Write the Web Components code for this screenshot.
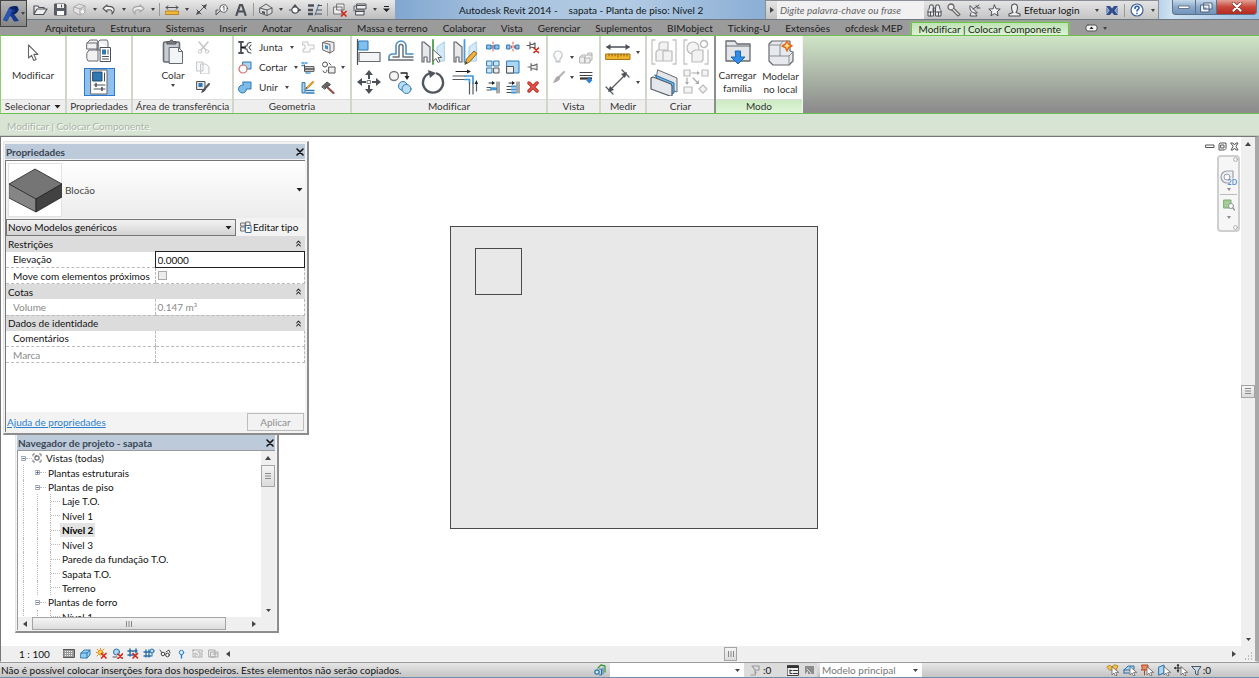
<!DOCTYPE html>
<html lang="pt"><head><meta charset="utf-8"><title>Revit</title>
<style>
html,body{margin:0;height:100%}
body{font:10px/14px Lato,"Open Sans",sans-serif;font-variant-ligatures:none;color:#111;overflow:hidden}
</style></head>
<body>
<rv-app></rv-app>
<script>
const S = (w, h, body) => `<svg width="${w}" height="${h}" viewBox="0 0 ${w} ${h}" fill="none" stroke-linecap="round" stroke-linejoin="round">${body}</svg>`;
const K = '#4c5057', B = '#2f78b4', L = '#a6d4f2', G = '#c3c6c9';
const CUR = (x, y) => `<path transform="translate(${x} ${y})" d="M0 0v8l2-2 1.500 3 1.500-.7-1.400-2.900h2.700z" fill="#fff" stroke="#666" stroke-width=".8"/>`;
const RX = (x, y) => `<path transform="translate(${x} ${y})" d="M0 0l4.500 4.500M4.500 0L0 4.500" stroke="#d42a1e" stroke-width="1.700"/>`;
const ICONS = {
  drop: S(5, 3, `<path d="M0 0h5L2.500 3z" fill="#444"/>`),
  dropsm: S(4, 3, `<path d="M0 0h4L2 3z" fill="#444"/>`),
  dropbig: S(7, 4, `<path d="M.5 0h6L3.500 3.500z" fill="#222"/>`),
  custom: S(7, 7, `<path d="M1 0h5v1H1zM0 2.500h7L3.500 6z" fill="#222"/>`),
  up: S(6, 4, `<path d="M0 4h6L3 0z" fill="#444"/>`),
  left: S(4, 6, `<path d="M4 0v6L0 3z" fill="#444"/>`),
  right: S(4, 6, `<path d="M0 0v6l4-3z" fill="#444"/>`),
  close: S(8, 8, `<path d="M1 1l6 6M7 1L1 7" stroke="#111" stroke-width="1.600"/>`),
  chev: S(5, 7, `<path d="M.7 3l1.800-2 1.800 2M.7 6l1.800-2 1.800 2" stroke="#222" stroke-width="1.100"/>`),
  revit: S(19, 20, `<path d="M1 16L7 4l8-2 2 4-5 4 5 7-5 .5-3-5-2 0-2 5z" fill="#173a8c"/><path d="M7 4l4-.5-5 13L1 16z" fill="#2a55b0"/><path d="M7 4c2-2 8-3 9 0 1 4-2 6-6 7l1-2.500c3-1 3-3.500-1-3z" fill="#0a2264"/>`),
  open: S(15, 12, `<path d="M1 10V2h4l1 1.500h5V5M1 10l3-5h10l-3.500 5.500H1z" fill="#eee" stroke="${K}" stroke-width="1.200"/>`),
  save: S(13, 13, `<path d="M1 1h10l1 1v10H1z" fill="#5a5f67" stroke="${K}"/><path d="M3 1h7v4H3z" fill="#eee"/><path d="M3 8h7v4H3z" fill="#fff"/><path d="M7.500 2v2" stroke="${K}"/>`),
  sync: S(14, 13, `<path d="M1 4l5-3 6 2v6l-5 3-6-3zM1 4l6 2 5-3M7 6v6" fill="#e4e4e4" stroke="#aaa"/><circle cx="9.500" cy="8.500" r="2.500" fill="#f2f2f2" stroke="#b4b4b4"/>`),
  undo: S(14, 11, `<path d="M5 1L1 4.500 5 8V6c4-1 6 .5 5 4 4-4 2-8.500-5-7.500z" fill="#f4f4f4" stroke="#555" stroke-width="1.100"/>`),
  redo: S(14, 11, `<path d="M9 1l4 3.500L9 8V6c-4-1-6 .5-5 4-4-4-2-8.500 5-7.500z" fill="#eee" stroke="#a2a2a2" stroke-width="1.100"/>`),
  ruler: S(14, 10, `<path d="M1 2.500h12M3 .8L1 2.500l2 1.700M11 .8l2 1.700-2 1.700" stroke="${K}"/><path d="M.5 6h13v3.500H.5z" fill="#f2b83c" stroke="#a87514" stroke-width=".8"/>`),
  dim: S(13, 13, `<path d="M3 10l7-7M2 7l4 4M7 2l4 4" stroke="${K}"/><path d="M1 12l1.500-4 2.500 2.500zM12 1L8 2.500 10.500 5z" fill="${K}"/>`),
  tag: S(13, 12, `<circle cx="8.500" cy="4.500" r="3.800" fill="#fff" stroke="${K}" stroke-width=".9"/><path d="M8 3l1-.7v4M5 7l-4 4V6h2" stroke="${K}" stroke-width=".9"/>`),
  letter: S(12, 12, `<path d="M1.500 11L5 1h2l3.500 10M3 7.500h6" stroke="${K}" stroke-width="2.200"/>`),
  cube3: S(14, 13, `<path d="M1 5l6-4 6 4v5l-5 2.500L1 10z" fill="#ddd" stroke="${K}" stroke-width=".9"/><path d="M1 5l7 2 5-2M8 7v5.500" stroke="${K}" stroke-width=".9"/><path d="M3 8l3 .8v2.400L3 10z" fill="${K}"/>`),
  section: S(12, 12, `<path d="M0 6h3M9 6h3" stroke="${K}"/><circle cx="6" cy="6" r="3.200" fill="#fff" stroke="${K}" stroke-width="1.200"/><path d="M6 0l2.500 3h-5zM9 4l3 2-3 2z" fill="${K}"/>`),
  thin: S(14, 12, `<path d="M0 1.500h6M0 6h5M0 10h5" stroke="${K}" stroke-width="2.400" stroke-linecap="butt"/><path d="M7 11l4-11" stroke="${B}"/><path d="M10 1.500h4M9 6h5M8 10h6" stroke="${K}" stroke-width="1"/>`),
  closehid: S(14, 14, `<path d="M4 1h7v6H4zM1 4h8v7H1z" fill="#eee" stroke="#666" stroke-width=".9"/>${RX(8.500, 8.500)}`),
  switchw: S(14, 13, `<path d="M4 1h9v5H4zM3 7h8v5H3z" fill="#eee" stroke="${K}"/><path d="M4 2.500h8M3 8.500h8" stroke="${K}"/><path d="M1 8V3h1.500" stroke="${K}" stroke-width=".9"/>`),
  binoc: S(15, 13, `<path d="M2 5l1-4h3l.5 4v7H1V7zM13 5l-1-4H9l-.5 4v7H14V7z" fill="#eee" stroke="${K}"/><path d="M6.500 4h2v3h-2zM1 8h5.500M8.500 8H14M3.500 8v4M11.500 8v4" stroke="${K}"/>`),
  key: S(14, 14, `<circle cx="4" cy="4" r="3" fill="#eee" stroke="#666" stroke-width="1.300"/><path d="M5 7l6 6 2-1.500L7 5.500" fill="#eee" stroke="#666" stroke-width="1.100"/>`),
  sat: S(13, 13, `<path d="M2 2c-1 4 2 8 7 7zM3 9l-1 3h7l-2-3" fill="#eee" stroke="${K}"/><path d="M5 5l6-4M9 4h3M8 1.500l2 2" stroke="${K}"/>`),
  star: S(13, 13, `<path d="M6.500 1l1.600 3.800 4.100.3-3.100 2.700 1 4-3.600-2.200L2.900 11.800l1-4L.800 5.100l4.100-.3z" fill="#f4f4f4" stroke="${K}"/>`),
  person: S(13, 14, `<path d="M3.500 4.500a3 3.500 0 0 1 6 0c0 3-1 4-1.500 5l4 1.500V13H1v-2l4-1.500c-.5-1-1.500-2-1.500-5z" fill="#eee" stroke="${K}" stroke-width="1.100"/>`),
  xchg: S(12, 11, `<path d="M0 1h4l2 2.500L8 1h4L8.500 5.500 12 10H8L6 7.500 4 10H0l3.500-4.500z" fill="#2f4f8e"/><path d="M0 2v7l3-3.500zM12 2v7L9 5.500z" fill="#7b93c4"/>`),
  help: S(14, 14, `<circle cx="7" cy="7" r="6" fill="#fff" stroke="#3f5f95" stroke-width="1.200"/><path d="M5 5.500c0-3 4-2.800 4-.5 0 1.500-2 1.500-2 3M7 10.400v.2" stroke="#2d5fb2" stroke-width="1.600"/>`),
  wmin: S(12, 6, `<path d="M1 2h10v2.500H1z" fill="#fff" stroke="#50627a" stroke-width=".8"/>`),
  wmax: S(13, 11, `<path d="M4 1h8v6H4zM1 3h8v7H1z" fill="#eef4fa" stroke="#50627a"/><path d="M3.500 5.500h3v2h-3z" fill="#6a86a8"/>`),
  wclose: S(12, 10, `<path d="M2.500 1.500l7 7M9.500 1.500l-7 7" stroke="#73302a" stroke-width="3.400"/><path d="M2.500 1.500l7 7M9.500 1.500l-7 7" stroke="#fff" stroke-width="2.200"/>`),
  arrow: S(12, 18, `<path d="M1.500 1v13l3-2.700 2.300 5.200 2.400-1-2.300-5.100h4z" fill="#fff" stroke="#666" stroke-width="1.100"/>`),
  types: S(26, 26, `<path d="M1 5l3-3h7l1 2V11H1zM12 4l2-2h7l1 2v5M1 15l2-3h9v11H2l-1-2zM12 4v8h6" fill="#f1f1f2" stroke="#666b72"/><path d="M1 5h10v7" stroke="#666b72"/><rect x="14.500" y="9.500" width="10" height="14" fill="#fff" stroke="${K}"/><path d="M16 11.500h4v5h-4z" fill="${B}"/><path d="M22 12v4M16.500 18.500h6M16.500 21h6" stroke="${K}"/>`),
  props: S(18, 26, `<rect x="1" y="1" width="16" height="24" fill="#fff" stroke="#666"/><path d="M3 3h9v9H3z" fill="#2f78b4" stroke="#27496c"/><path d="M14.500 4v8M4 16h11M4 20h11" stroke="${K}"/><path d="M6 14.500v3M12 18.500v3" stroke="${K}" stroke-width="1.600"/>`),
  paste: S(22, 26, `<rect x="1.500" y="3" width="16" height="20" rx="1.500" fill="#c9ccd1" stroke="#666b72" stroke-width="1.600"/><path d="M5 4V2.500h3C8 .5 11 .5 11 2.500h3V5H5z" fill="#777c84" stroke="#555"/><path d="M7.500 8.500h9l4 4v12h-13z" fill="#f2f4f7" stroke="#666b72"/><path d="M16.500 8.500v4h4" stroke="#666b72"/>`),
  cut: S(13, 13, `<path d="M2 1l7 8M11 1L4 9" stroke="${G}" stroke-width="1.500"/><circle cx="3" cy="10.500" r="1.700" stroke="${G}"/><circle cx="10" cy="10.500" r="1.700" stroke="${G}"/>`),
  copy2: S(14, 13, `<path d="M1 1h6v9H1zM5 3h5l3 3v7H5z" fill="#fafafa" stroke="${G}"/>`),
  match: S(14, 14, `<path d="M1 1.500h8v8H1z" fill="#e8e8e8" stroke="${K}"/><path d="M2.500 3h4v4h-4z" fill="${B}"/><path d="M13 4L9 8.500" stroke="#555" stroke-width="2"/><path d="M9 8c2 1 0 4-4 5 1-2 1-4 4-5z" fill="${K}"/>`),
  cope: S(14, 13, `<path d="M1 1h4M1 12h4M3 1v11" stroke="${K}" stroke-width="1.800"/><path d="M4 6.500h3" stroke="#111" stroke-width="2"/><path d="M13 1.500c-3 0-4 2-4 3.500H7v3h2c0 2 1 4 4 4M13 4l-2 2.500L13 9" stroke="${K}" stroke-width="1.100"/>`),
  cutg: S(14, 13, `<path d="M5 1h8v7H5z" fill="${L}" stroke="${B}"/><circle cx="5" cy="8" r="4" fill="#fff" stroke="#d86a6a" stroke-width="1.200"/>`),
  join: S(14, 13, `<path d="M5 1h8v7H8.500A4 4 0 1 1 5 4z" fill="#7bbce8" stroke="${B}"/>`),
  jt: S(13, 12, `<path d="M1 1h5v3h6v4H8v3H1V8h2V4H1z" fill="#fafafa" stroke="${G}"/>`),
  face: S(13, 14, `<path d="M1 2.500l7 2V13l-7-3zM1 2.500L5 1l7 1.500v8L8 13" fill="#eee" stroke="#666"/><path d="M3 5l3 1v3.500L3 8.500z" fill="#3b8fd0"/>`),
  beam: S(14, 13, `<path d="M1 2h5M1 4.500h2M5 12h4" stroke="#3f97d8" stroke-width="1.600" stroke-dasharray="2 1.500"/><path d="M4 5.500h9v5H4z" fill="#ccc" stroke="#666"/><path d="M4 8h9" stroke="#555" stroke-width="1.400"/><path d="M3.500 4v6" stroke="${K}"/>`),
  split: S(15, 13, `<circle cx="4" cy="3.500" r="2.500" stroke="#555"/><path d="M8 6h6v6H8z" fill="#eee" stroke="#555"/><path d="M2 10a2 2 0 1 0 4-1M8 2l2 2" stroke="#555"/>`),
  demol: S(14, 13, `<path d="M1 2v10h3V2z" fill="${L}" stroke="${B}"/><path d="M5 9.500h8M5 12h8" stroke="${B}" stroke-width="1.500"/><path d="M6 7l6-6" stroke="#e09a2d" stroke-width="2.300"/><path d="M5 8l.5-1.500" stroke="${K}"/>`),
  hammer: S(14, 13, `<path d="M6 6l6.500 6" stroke="#8d4f49" stroke-width="2.200"/><path d="M1 5.500L6 1l3.500 2.500-1.500 1.500-1.500 0L4 8z" fill="#666" stroke="${K}"/>`),
  align: S(26, 26, `<path d="M1.500 0v26" stroke="${K}" stroke-width="1.200"/><rect x="3" y="2" width="9" height="9" fill="#7fc0ee" stroke="${B}"/><rect x="3" y="13.500" width="21" height="9" fill="#f3f4f6" stroke="#666b72" stroke-width="1.200"/>`),
  offset: S(26, 24, `<path d="M1 20v-3c0-2 2-3 4-3h3V6a4.500 4.500 0 0 1 10 0v8h7" stroke="#4a90c8" stroke-width="1.600"/><path d="M1 20h24M5 17h6V6.500a2 2 0 0 1 4 0V17h10" stroke="#6b7078" stroke-width="1.500"/>`),
  mirpick: S(26, 26, `<path d="M2 3h2l6 5v15H7v-5H4v5H2z" fill="#e7e8ea" stroke="#666b72" stroke-width="1.200"/><path d="M13 1v24" stroke="#4aa04a" stroke-width="1.800"/><path d="M24 3l-7 5v14h7z" fill="#d5eaf8" stroke="#a5cbe6"/><path d="M13 11v11l3-2.500 2 4 2-1-2-4h3.500z" fill="#fff" stroke="#666"/>`),
  mirdraw: S(26, 26, `<path d="M2 3h2l6 5v15H7v-5H4v5H2z" fill="#e7e8ea" stroke="#666b72" stroke-width="1.200"/><path d="M12.500 1v22" stroke="#4a9bd8" stroke-width="1.800"/><path d="M24 3l-7 5v14h7z" fill="#d5eaf8" stroke="#a5cbe6"/><path d="M13 25l1.500-5L22 12l3 2.500-7 8z" fill="#f0b23c" stroke="#8c621b"/><path d="M13 25l1-2.500 1.500 1.500z" fill="#333"/>`),
  move: S(26, 26, `<path d="M13 1l4 5h-3v4h-2V6H9zM13 25l4-5h-3v-4h-2v4H9zM1 13l5-4v3h4v2H6v3zM25 13l-5-4v3h-4v2h4v3z" fill="${K}"/><path d="M11.500 11.500h3v3h-3z" fill="#fff" stroke="#777"/>`),
  copy: S(26, 26, `<circle cx="6" cy="7" r="4.500" fill="#f5f5f5" stroke="#777" stroke-width="1.300"/><path d="M13 4h6v4" stroke="#222" stroke-width="1.300"/><path d="M16.500 7h5L19 11z" fill="#222"/><circle cx="15" cy="17" r="4.500" fill="#b8ddf5" stroke="${B}"/><circle cx="18.500" cy="20" r="4.500" fill="#b8ddf5" stroke="${B}"/>`),
  rotate: S(26, 26, `<path d="M9 4.500a10 10 0 1 0 8 0" stroke="#51565e" stroke-width="2.400"/><path d="M8 1l8 3-6 5z" fill="#51565e"/>`),
  trim: S(26, 26, `<path d="M4 2.500h13" stroke="#222"/><path d="M15 .5l4 2-4 2z" fill="#222"/><path d="M1 7h12M1 10.500h12" stroke="#555a61" stroke-width="1.200"/><path d="M13 7h8v7M13 10.500h4.500V14" stroke="#3f97d8" stroke-width="1.700"/><path d="M17.500 14v11M21 14v11M24.500 22v-8" stroke="#555a61" stroke-width="1.200"/><path d="M22.500 15l2-4 1.500 4z" fill="#222"/>`),
  spl1: S(14, 12, `<path d="M1 4h4v4H1zM9 4h4v4H9zM5 5h4M5 7h4" fill="#8cc5ee" stroke="${B}"/><path d="M7 1v10" stroke="#d85a4a" stroke-dasharray="2 1.500"/>`),
  spl2: S(14, 12, `<path d="M1 4h3v4H1zM10 4h3v4h-3z" fill="#8cc5ee" stroke="${B}"/><path d="M7 1v10M5.500 5v2M8.500 5v2" stroke="#d85a4a" stroke-dasharray="2 1.500"/>`),
  unpin: S(14, 14, `<path d="M1 5.500h3M4 2v7M4 4c2 1 3 1 5-1v5c-2-1-3-1-5-.5" stroke="#555" stroke-width="1.100"/>${RX(8, 8)}`),
  array: S(14, 14, `<path d="M1 1h5v5H1zM8 1h5v5H8zM1 8h5v5H1z" fill="#cfe6f7" stroke="${B}"/><path d="M8 8h5v5H8z" fill="#eee" stroke="#555"/>`),
  scale: S(14, 14, `<path d="M1 1h12v12H1z" fill="#a8d6f5" stroke="${B}"/><path d="M1 6.500h6.500V13H1z" fill="#f3f3f3" stroke="#555"/>`),
  pin: S(12, 10, `<path d="M1 5h3M4 1.500v7M4 3c2 1 3 1 6-1v6c-3-2-4-1.500-6-1" fill="#eee" stroke="#666" stroke-width="1.100"/>`),
  tr1: S(14, 13, `<path d="M3 2h4" stroke="#222"/><path d="M6 0l3 2-3 2z" fill="#222"/><path d="M1 6.500h4M1 9h4" stroke="#555"/><path d="M5.500 7.800h4" stroke="#3f97d8" stroke-width="3"/><path d="M11 1v11M13 1v11" stroke="#555"/>`),
  tr2: S(14, 13, `<path d="M3 2h4" stroke="#222"/><path d="M1 5.500h4M1 8.500h4M1 11.500h4" stroke="#444"/><path d="M6 0l3 2-3 2z" fill="#222"/><path d="M5.500 5.500h4M5.500 8.500h4M5.500 11.500h4" stroke="#3f97d8" stroke-width="1.800"/><path d="M11 1v11M13 1v11" stroke="#555"/>`),
  del: S(12, 12, `<path d="M2 2l8 8M10 2l-8 8" stroke="#b62b22" stroke-width="3.400"/><path d="M2 2l8 8M10 2l-8 8" stroke="#e85a4c" stroke-width="1.600"/>`),
  bulb: S(12, 14, `<path d="M4 9C0 6 2 1 6 1s6 5 2 8v3H4zM4 11h4" fill="#fafafa" stroke="${G}" stroke-width="1.100"/>`),
  boxes: S(14, 13, `<path d="M1 6h5v6H1zM6 7h5v5H6zM1 6l2-2h4l-1 2M8 4h5v5l-2 1M8 4l1-2h4v2" fill="#eee" stroke="#b5b5b5"/>`),
  brush: S(13, 13, `<path d="M12 1L7 6" stroke="#b5b5b5" stroke-width="2.200"/><path d="M7 5c3 2 0 6-6 7 2-3 2-7 6-7z" fill="#ababab"/>`),
  linew: S(14, 13, `<path d="M1 1.500h12M1 4.500h12" stroke="#444" stroke-width="1"/><path d="M1 7.500h12" stroke="#333" stroke-width="2.200" stroke-linecap="butt"/><path d="M9 6h2.500v3h2l-3.200 3.500L7 9h2z" fill="#2a80d8"/>`),
  meas: S(26, 18, `<path d="M2 4h22" stroke="${K}" stroke-width="1.300"/><path d="M1 4l4.500-3v6zM25 4l-4.500-3v6z" fill="${K}"/><path d="M1 11h24v5.500H1z" fill="#efb32e" stroke="#a4751b"/><path d="M4 11v2M7 11v2M10 11v2M13 11v3M16 11v2M19 11v2M22 11v2" stroke="#7a5410" stroke-width=".8"/>`),
  dimbig: S(26, 26, `<path d="M5 21L20 6M1 18l7 7M17 1l7 7" stroke="#555a61" stroke-width="1.300"/><path d="M3 23l2-6 4 4zM22 3l-6 2 4 4z" fill="${K}"/>`),
  grp: S(26, 26, `<path d="M4 1H1v24h3M22 1h3v24h-3" stroke="#c4c4c4" stroke-width="1.300"/><path d="M5 13l2-2h5v11H5zM12 12h9v10h-9zM8 5l2-2h7v8H8z" fill="#f2f2f2" stroke="#bbb" stroke-width="1.200"/>`),
  sim: S(26, 26, `<path d="M4 1H1v24h3M22 25h3V11" stroke="#c4c4c4" stroke-width="1.300"/><circle cx="10" cy="9" r="6" fill="#f4f4f4" stroke="#bbb" stroke-width="1.200"/><path d="M9 13l3-2h8v10l-2 2H9z" fill="#f2f2f2" stroke="#bbb" stroke-width="1.200"/><circle cx="21" cy="5" r="3.500" stroke="#bbb" stroke-width="1.600" stroke-dasharray="2 1"/>`),
  sheets: S(28, 27, `<path d="M8 1l19 8v14l-3-1L6 12z" fill="#e3e5e8" stroke="#666b72"/><path d="M5 6l19 8v10l-4 2z" fill="#6fb8ee" stroke="#286ba5"/><path d="M1 9l2-1 18 7 1 2v10l-2 0L1 20z" fill="#e4e7eb" stroke="#555a61" stroke-width="1.200"/>`),
  asm: S(26, 26, `<path d="M1 1h6v6H1zM19 1h6v6h-6zM1 18h8v6H1zM20 16l4 4-4 4-4-4z" fill="#f4f4f4" stroke="#bbb" stroke-width="1.200"/><path d="M9 4h6M4 9v4M10 9l4 4" stroke="#aaa" stroke-width="1.200"/><path d="M14 2l3 2-3 2zM16 15l0-4-4 4zM2 13h4l-2 3z" fill="#aaa"/>`),
  loadfam: S(26, 26, `<path d="M1 22V2h9l2 3h13v17z" fill="#e3e5e9" stroke="#666b72" stroke-width="1.300"/><path d="M1 7h24" stroke="#666b72"/><path d="M10.500 12h5v6H20l-7 7-7-7h4.500z" fill="#2f8fe8" stroke="#1a66b4"/>`),
  inplace: S(26, 27, `<path d="M1 5l3-3h18v10l3 1v9l-4 4H5l-4-4z" fill="#e8e9ec" stroke="#666b72" stroke-width="1.200"/><path d="M1 6h11v11H2M12 6l3-4M12 17h9l4-4M21 17v9" stroke="#8a8f96"/><path d="M19 2l1.500 3L24 7l-3.500 1.500L19 12l-1.500-3.500L14 7l3.500-2z" fill="#fbe08a" stroke="#e06a1c" stroke-width="1.500"/>`),
  tabmin: S(13, 8, `<rect x="1" y="1" width="11" height="6" rx="2" fill="#f3f3f3" stroke="#555"/><path d="M4.500 5h4l-2-2.500z" fill="#222"/>`),
  block: S(53, 52, `<path d="M0 20L26 5l27 15-26 15z" fill="#757575" stroke="#222" stroke-width=".8"/><path d="M0 20l27 15v13L0 34z" fill="#858585" stroke="#222" stroke-width=".8"/><path d="M53 20L27 35v13l26-15z" fill="#424242" stroke="#222" stroke-width=".8"/>`),
  edittype: S(12, 12, `<path d="M1 2h4v3H1zM6 1h4v4H6zM1 6h4v4H1z" fill="#eee" stroke="#666" stroke-width=".9"/><path d="M6 4.500h5v7H6z" fill="#fff" stroke="#345f8f" stroke-width=".9"/><path d="M7.500 6h2v2h-2z" fill="${B}"/>`),
  views: S(10, 10, `<path d="M1 3V1h1.500M7.500 1H9v2M9 7v2H7.500M2.500 9H1V7" stroke="#777"/><rect x="3" y="3" width="4" height="4" rx="1" stroke="#444"/>`),
  minus: S(5, 5, `<rect x=".5" y=".5" width="4" height="4" fill="#fff" stroke="#a0a6b0"/><path d="M1.500 2.500h2" stroke="#355a9a" stroke-width=".8"/>`),
  plus: S(5, 5, `<rect x=".5" y=".5" width="4" height="4" fill="#fff" stroke="#a0a6b0"/><path d="M1.500 2.500h2M2.500 1.500v2" stroke="#355a9a" stroke-width=".8"/>`),
  detail: S(12, 9, `<rect x=".5" y=".5" width="11" height="8" fill="#999" stroke="#555"/><path d="M2 2.500h8M2 4.500h8M2 6.500h8" stroke="#eee" stroke-dasharray="1 1" stroke-width="1" stroke-linecap="butt"/>`),
  vstyle: S(11, 10, `<path d="M1 4l3-3h6v5L7 9H1zM1 4h6v5M7 4l3-3" fill="#8fd0f5" stroke="#2a6ea8" stroke-width=".9"/>`),
  sun: S(11, 11, `<circle cx="4.500" cy="4.500" r="2.500" fill="#ffd24a" stroke="#d98b12"/><path d="M4.500 0v1M0 4.500h1M1.200 1.200l.6.6M8 1l-.7.7M1 8l.7-.7" stroke="#d98b12"/>${RX(5.500, 5.500)}`),
  shadow: S(11, 11, `<circle cx="4.500" cy="4" r="3" fill="#a8d8f6" stroke="#2a6ea8"/><path d="M1 9h4" stroke="#555"/>${RX(6, 6)}`),
  crop: S(12, 11, `<path d="M3 1v7M1 3h9M1 7h7M9 1v4" stroke="#2a6ea8" stroke-width="1.500"/>${RX(6, 5.500)}`),
  cropv: S(12, 11, `<path d="M3 2v7M1 4h7M1 8h7M6 2v7" stroke="#2a6ea8" stroke-width="1.300"/><circle cx="9" cy="3" r="2" fill="#bfe2f8" stroke="#2a6ea8"/><path d="M9 5v3" stroke="#2a6ea8"/>`),
  glasses: S(12, 9, `<path d="M1 1l2 3M7 3l3-2 1 3" stroke="#555"/><circle cx="4" cy="5" r="1.800" fill="#fff" stroke="#444"/><circle cx="8.500" cy="6" r="1.800" fill="#fff" stroke="#444"/>`),
  bulbb: S(7, 10, `<circle cx="3.500" cy="3.500" r="2.200" fill="#d8effc" stroke="#2b80c4"/><path d="M3.500 6v3" stroke="#2b80c4" stroke-width="1.400"/>`),
  tvp: S(11, 9, `<path d="M1 1h9v7H1z" stroke="#aaa" stroke-dasharray="2 1"/><path d="M3 7V4l3 2M6 3h2v4" stroke="#aaa"/>`),
  ana: S(11, 9, `<path d="M1 1h6v7H1zM3 3h7v5H3zM5 5h4" stroke="#aaa"/>`),
  group: S(12, 12, `<path d="M4 4l3-3 4 1v6" stroke="#3c9a46" stroke-width="1.300"/><circle cx="3" cy="8" r="2.200" fill="#cfe9f9" stroke="#2373a8" stroke-width="1.200"/><path d="M5.500 5h2v6h-2M9 4v6" stroke="#2373a8"/>`),
  editreq: S(11, 11, `<path d="M2 1h7v4H5zM5 5v3M1 10h4l1-3" fill="#ddd" stroke="#999" stroke-width="1.100"/>`),
  wset: S(12, 11, `<rect x=".5" y=".5" width="11" height="10" fill="#eee" stroke="#444"/><path d="M0 2h12" stroke="#333" stroke-width="2"/><path d="M3 5v3.500h2M3 5.500h2M6.500 5.500h4M6.500 8.500h4" stroke="#333"/>`),
  dopt: S(11, 11, `<path d="M1 1h9v8H1z" fill="#8c8c8c"/><path d="M3 4l4 4v2" stroke="#ddd"/><path d="M1 9l3-3v4z" fill="#ddd"/>`),
  sellink: S(14, 12, `<path d="M1 3c2-3 4-1 5 0 2-3 4-2 6-1l-2 4H4z" fill="#f2c24a" stroke="#b4821c"/>${CUR(6, 3)}`),
  selund: S(14, 12, `<path d="M1 6l4-4h6v3M1 6h6M1 9h5M1 6v3" fill="#a8d8f6" stroke="#2a6ea8"/>${CUR(7, 3)}`),
  selpin: S(14, 12, `<path d="M2 1h6v4l2 1H1l1-1zM4.500 6v5" fill="#e88a5c" stroke="#b0492a"/>${CUR(7, 3)}`),
  selface: S(14, 12, `<path d="M2 3l5-2v8l-5 2z" fill="#a8d8f6" stroke="#2a6ea8"/>${CUR(7, 3)}`),
  drag: S(14, 12, `<path d="M4 0v8M0 4h8" stroke="#333" stroke-width="1.200"/><path d="M4 0l1.500 2h-3zM4 8l1.500-2h-3zM0 4l2-1.500v3z" fill="#333"/>${CUR(7, 3)}`),
  filter: S(11, 11, `<path d="M1 1.500h9L7 6v4L4.500 9V6z" fill="#c9dbe8" stroke="#4b5866"/>`),
  vmin: S(10, 5, `<rect x="1" y="1" width="8" height="2.500" fill="#fff" stroke="#555"/>`),
  vmax: S(9, 9, `<path d="M2.500 1H8v5.500L6.500 8H1V2.500zM3 3h3v3H3z" fill="#fff" stroke="#555"/>`),
  vclose: S(9, 9, `<path d="M1 1h2l1.500 2L6 1h2L6 4.500 8 8H6L4.500 6 3 8H1l2-3.500z" fill="#fff" stroke="#555"/>`),
  wheel: S(17, 16, `<path d="M13 8V1H7a6 6 0 1 0 0 12h2" fill="#eef0f3" stroke="#9aa1aa" stroke-width="1.200"/><circle cx="7" cy="7" r="3" fill="#fff" stroke="#9aa1aa"/>`),
  zoomr: S(12, 12, `<path d="M1 1h7v8H1z" fill="#a5cd95" stroke="#7fa973"/><circle cx="8" cy="7" r="2.500" fill="#fff" stroke="#8e959e"/><path d="M10 9l1.500 2" stroke="#8e959e" stroke-width="1.300"/>`),
  dot: S(5, 5, `<circle cx="2.500" cy="2.500" r="1.900" fill="#fff" stroke="#aaa"/>`),
  griph: S(8, 6, `<path d="M1.500 0v6M4 0v6M6.500 0v6" stroke="#888"/>`),
  gripv: S(6, 8, `<path d="M0 1.500h6M0 4h6M0 6.500h6" stroke="#888"/>`),
  corner: S(9, 9, `<path d="M7 1h1M7 4h1M4 4h1M7 7h1M4 7h1M1 7h1" stroke="#aaa" stroke-width="1.400" stroke-linecap="butt"/>`),
};

const BASE = `*{box-sizing:border-box}
button,input,select{font:inherit;color:inherit;margin:0;padding:0;border:0;background:none;border-radius:0;outline:0}
button{display:inline-flex;align-items:center;justify-content:center;white-space:nowrap;flex:none}
select{appearance:none}`;

function define(name, css, html) {
  customElements.define(name, class extends HTMLElement {
    constructor() {
      super();
      this.attachShadow({mode: 'open'});
    }
    connectedCallback() {
      const body = typeof html === 'function' ? html(this) : html;
      this.shadowRoot.innerHTML = `<style>${BASE}${css}</style>${body}`;
    }
  });
}
const i = n => `<rv-icon name="${n}"></rv-icon>`;
const btn = (n, label, extra = '') => `<button aria-label="${label}" ${extra}>${i(n)}</button>`;

define('rv-icon', `:host{display:inline-block;line-height:0;flex:none}svg{display:block}`,
  el => ICONS[el.getAttribute('name')]);

/* Title bar: quick access, document title, search and window buttons */
define('rv-titlebar', `
:host{display:flex;height:20px;background:linear-gradient(90deg,#7fa6d0 31%,#a9c3de 40%,#b3cbe4 50%,#8db0d6 60%,#8cb0d8 90%,#cfe2f2 93%,#9cc0e2);position:relative;border-bottom:1px solid #6f7780}
.app{position:absolute;left:0;top:0;width:27px;height:27px;z-index:2;background:linear-gradient(#b4b4b4,#858585);border:1px solid #444}
.qat{display:flex;align-items:center;width:395px;flex:none;padding-left:30px;background:linear-gradient(#e8e8e8,#bdbdbd)}
.qat button{width:20px;height:19px}
.qat .d{width:9px}
.qat .d:last-child{width:15px}
.sep{width:1px;height:13px;background:#999;margin:0 2px;flex:none}
.title{flex:1;display:flex;gap:11px;padding-left:64px;align-items:center;white-space:pre;color:#111820}
.info{display:flex;align-items:center;width:394px;flex:none;background:linear-gradient(#e4e4e4,#c4c4c4);border:1px solid #8a8f96;border-width:1px 1px 0}
.info button{width:20px;height:18px}
.info .a{width:11px}
.info input{flex:1;min-width:0;height:18px;background:#f1f1f1;padding-left:3px;font-style:italic;color:#555}
.info input::placeholder{color:#666;opacity:1}
.info .login{width:67px;justify-content:flex-start}
.win{display:flex;width:100px;flex:none;padding:0 2px 0 13px}
.win button{height:15px;border:1px solid #5f7186;border-top:0;background:linear-gradient(#c6d9ec,#8ba9c9 50%,#6f94bb)}
.win button:nth-child(1){width:24px;border-radius:0 0 0 4px}
.win button:nth-child(2){width:21px;border-left:0}
.win button:nth-child(3){flex:1;border-left:0;border-radius:0 0 4px 0;background:linear-gradient(#e3a496,#c9473a 50%,#b52a20)}
`, `<button class="app" aria-label="Menu">${i('revit')}${i('dropsm')}</button>
<div class="qat">${btn('open', 'Abrir')}${btn('save', 'Salvar')}${btn('sync', 'Sincronizar')}${btn('dropsm', 'Opções', 'class="d"')}${btn('undo', 'Desfazer')}${btn('dropsm', 'Lista', 'class="d"')}${btn('redo', 'Refazer')}${btn('dropsm', 'Lista', 'class="d"')}<span class="sep"></span>${btn('ruler', 'Medir')}${btn('dropsm', 'Lista', 'class="d"')}${btn('dim', 'Cota')}${btn('tag', 'Identificador')}${btn('letter', 'Texto')}<span class="sep"></span>${btn('cube3', 'Vista 3D')}${btn('dropsm', 'Lista', 'class="d"')}${btn('section', 'Corte')}${btn('thin', 'Linhas finas')}<span class="sep"></span>${btn('closehid', 'Fechar ocultas')}${btn('switchw', 'Alternar')}${btn('dropsm', 'Lista', 'class="d"')}${btn('custom', 'Personalizar', 'class="d"')}</div>
<div class="title"><span>Autodesk Revit 2014 -</span><span>sapata - Planta de piso: Nível 2</span></div>
<div class="info">${btn('right', 'Expandir', 'class="a"')}<input aria-label="Busca" placeholder="Digite palavra-chave ou frase">${btn('binoc', 'Buscar')}${btn('key', 'Assinatura')}${btn('sat', 'Comunicação')}${btn('star', 'Favoritos')}${btn('person', 'Conta')}<button class="login">Efetuar login</button>${btn('dropsm', 'Lista', 'class="a"')}${btn('xchg', 'Exchange')}<span class="sep"></span>${btn('help', 'Ajuda')}${btn('dropsm', 'Lista', 'class="a"')}</div>
<div class="win">${btn('wmin', 'Minimizar')}${btn('wmax', 'Restaurar')}${btn('wclose', 'Fechar')}</div>`);

/* Ribbon tab strip */
const TABS = ['Arquitetura', 'Estrutura', 'Sistemas', 'Inserir', 'Anotar', 'Analisar', 'Massa e terreno', 'Colaborar', 'Vista', 'Gerenciar', 'Suplementos', 'BIMobject', 'Ticking-U', 'Extensões', 'ofcdesk MEP'];
define('rv-tabs', `
:host{display:flex;height:15px;background:#9b9b9b;padding-left:38px;align-items:flex-end}
button{height:14px;padding:0 8px 0 7px;color:#222}
.on{background:linear-gradient(#bfe3b4,#dcf3d3);border:1px solid #6fc04f;border-bottom:0;padding:0 7px;height:13px;box-shadow:0 0 2px #8fe070}
.m{padding:0 0 0 16px}.m+.m{padding:0 0 0 5px}
`, `${TABS.map(t => `<button>${t}</button>`).join('')}<button class="on">Modificar | Colocar Componente</button>${btn('tabmin', 'Minimizar faixa', 'class="m"')}${btn('dropsm', 'Lista', 'class="m"')}`);

/* One ribbon panel: body above, caption below */
define('rv-panel', `
:host{display:flex;flex-direction:column;flex:none;border-right:2px solid #cfd6cb;background:#fff}
:host([dark]){border-right:2px solid #8b8f89}
:host([green]){border-right:1px solid #f4f4f4}
.body{flex:1;display:flex;min-height:0}
.cap{height:14px;background:#eee;border-top:1px solid #ddd;text-align:center;color:#333;line-height:13px;white-space:nowrap;display:flex;justify-content:center;align-items:center;gap:4px}
:host([green]) .cap{background:linear-gradient(#cdeac2,#e0f5d9)}
`, el => `<div class="body"><slot></slot></div><div class="cap"><span>${el.getAttribute('label')}</span>${el.hasAttribute('menu') ? i('dropbig') : ''}</div>`);

define('rv-ribbon', `
:host{display:flex;height:79px;border-top:1px solid #6fbf4f;border-bottom:1px solid #6fbf4f;border-left:1px solid #8fcf70;background:linear-gradient(#cfe5c6,#8d8d8d 95%);color:#333}
.col{display:flex;flex-direction:column;align-items:center;width:100%}
.g3{display:grid;grid-template-rows:repeat(3,20px);padding-top:1px;align-content:start}
.g2{display:grid;grid-template-rows:repeat(2,30px);padding-top:1px;align-content:start}
.big{flex:1;flex-direction:column;justify-content:flex-start;height:62px;line-height:13px;padding-top:3px}
.big span{white-space:pre-line;margin-top:4px}
.big.cur{padding-top:8px}
.big.cur span{margin-top:7px}
.big.clip{flex:none;width:60px;padding-left:20px}
.big.clip span{margin-bottom:2px}
.sel{width:31px;height:28px;background:#8fc0ee;border:1px solid #2c7ad0;margin-top:2px}
.l{gap:7px;justify-content:flex-start}
`, `
<rv-panel label="Selecionar" menu style="width:66px"><button class="big cur">${i('arrow')}<span>Modificar</span></button></rv-panel>
<rv-panel label="Propriedades" style="width:66px"><div class="col">${btn('types', 'Tipo', 'style="height:30px"')}${btn('props', 'Propriedades', 'class="sel"')}</div></rv-panel>
<rv-panel label="Área de transferência" style="width:101px"><button class="big clip">${i('paste')}<span>Colar</span>${i('dropsm')}</button><div class="g3" style="width:20px">${btn('cut', 'Recortar')}${btn('copy2', 'Copiar')}${btn('match', 'Corresponder')}</div></rv-panel>
<rv-panel label="Geometria" style="width:118px"><div class="g3" style="padding-left:4px;grid-template-columns:60px 20px 20px 10px"><button class="l">${i('cope')}<span>Junta</span>${i('dropsm')}</button>${btn('jt', 'Junção')}${btn('face', 'Face')}<span></span><button class="l">${i('cutg')}<span>Cortar</span>${i('dropsm')}</button>${btn('beam', 'Viga')}${btn('split', 'Dividir face')}${btn('dropsm', 'Lista')}<button class="l">${i('join')}<span>Unir</span>${i('dropsm')}</button>${btn('demol', 'Parede')}${btn('hammer', 'Demolir')}</div></rv-panel>
<rv-panel label="Modificar" style="width:196px"><div class="g2" style="padding-left:1px;grid-template-columns:repeat(4,32px)">${['align', 'offset', 'mirpick', 'mirdraw', 'move', 'copy', 'rotate', 'trim'].map(n => btn(n, n)).join('')}</div><div class="g3" style="padding-left:2px;grid-template-columns:repeat(3,20px)">${['spl1', 'spl2', 'unpin', 'array', 'scale', 'pin', 'tr1', 'tr2', 'del'].map(n => btn(n, n)).join('')}</div></rv-panel>
<rv-panel label="Vista" style="width:53px"><div class="g3" style="grid-template-rows:20px 20px;padding-top:11px;grid-template-columns:20px 8px 20px">${btn('bulb', 'Ocultar')}${btn('dropsm', 'Lista')}${btn('boxes', 'Deslocar')}${btn('brush', 'Sobrepor')}${btn('dropsm', 'Lista')}${btn('linew', 'Espessura')}</div></rv-panel>
<rv-panel label="Medir" style="width:46px"><div class="g2" style="padding-left:2px;grid-template-columns:30px 10px">${btn('meas', 'Medir')}${btn('dropsm', 'Lista')}${btn('dimbig', 'Cota')}${btn('dropsm', 'Lista')}</div></rv-panel>
<rv-panel label="Criar" dark style="width:69px"><div class="g2" style="padding-left:1px;grid-template-columns:repeat(2,32px)">${btn('grp', 'Grupo')}${btn('sim', 'Similar')}${btn('sheets', 'Peças')}${btn('asm', 'Montagem')}</div></rv-panel>
<rv-panel label="Modo" green style="width:87px"><button class="big">${i('loadfam')}<span>Carregar
família</span></button><button class="big">${i('inplace')}<span>Modelar
no local</span></button></rv-panel>`);

define('rv-options', `
:host{display:flex;align-items:center;height:22px;padding:2px 7px 0;background:#d8e4d3;color:#aab3a6;text-shadow:1px 1px 0 #fff;border-bottom:1px solid #c3cac0}
`, `<span>Modificar | Colocar Componente</span>`);

/* Floating palette frame */
define('rv-palette', `
:host{display:flex;flex-direction:column;background:#f3f3f3;border:1px solid #e4e4e4;border-right:2px solid #8d8d8d;border-bottom:2px solid #8d8d8d;padding:2px 2px 1px 1px}
header{display:flex;align-items:center;justify-content:space-between;height:15px;flex:none;background:#bccada;padding:0 1px 0 1px;font-weight:bold;color:#3a4654}
`, el => `<header><span>${el.getAttribute('label')}</span>${btn('close', 'Fechar')}</header><slot></slot>`);

define('rv-properties', `
:host{display:flex;flex-direction:column;flex:1;border-left:1px solid #777;border-top:1px solid #777;margin-top:1px;min-height:0}
.type{display:flex;align-items:center;height:57px;background:linear-gradient(#fff,#ececec);padding:0 2px;color:#444;gap:3px}
.type .th{width:54px;height:54px;background:#fff;border:1px solid #e2e2e2}
.type .n{flex:1}
.pick{display:flex;height:18px;align-items:center}
.combo{position:relative;width:230px;display:flex;flex:none}
.combo select{width:100%;height:17px;border:1px solid #777;background:linear-gradient(#f2f2f2,#e4e4e4 50%,#d2d2d2);padding:0 1px}
.combo rv-icon{position:absolute;right:4px;top:7px}
.edit{margin-left:4px;gap:1px}
table{border-collapse:collapse;width:100%;table-layout:fixed;background:#fff}
col:first-child{width:149px}
th,td{padding:0;height:16px;line-height:14px;text-align:left;font-weight:normal;vertical-align:middle;border-bottom:1px dashed #bbb;white-space:nowrap}
th[colspan]{height:15px;background:#dcdcdc;border:0;padding-left:2px}
th[colspan] div{display:flex;justify-content:space-between;align-items:center;padding-right:4px;height:15px}
.r th{padding-left:7px}.r td{border-left:1px dashed #bbb;border-right:1px dashed #bbb;padding-left:2px}
.off{color:#8a8a8a}
td input[type=text]{display:block;width:100%;height:14px;border:0}
.r td.f{border:1px solid #222}
input[type=checkbox]{appearance:none;display:block;width:9px;height:9px;border:1px solid #aaa;background:#ececec}
.sp{flex:1;background:#fff}
footer{display:flex;height:20px;align-items:center;justify-content:space-between;padding:0 1px}
footer a{color:#2a7fd4}
footer button{width:57px;height:18px;border:1px solid #bdbdbd;color:#8f8f8f;background:#f2f2f2}
`, `<div class="type"><span class="th">${i('block')}</span><span class="n">Blocão</span>${btn('dropbig', 'Tipos')}</div>
<div class="pick"><span class="combo"><select aria-label="Filtro"><option>Novo Modelos genéricos</option></select>${i('dropbig')}</span><button class="edit">${i('edittype')}<span>Editar tipo</span></button></div>
<table><colgroup><col><col></colgroup><tbody>
<tr><th colspan="2"><div>Restrições${i('chev')}</div></th></tr>
<tr class="r"><th><label for="e">Elevação</label></th><td class="f"><input type="text" id="e" value="0.0000"></td></tr>
<tr class="r"><th><label for="m">Move com elementos próximos</label></th><td><input type="checkbox" id="m"></td></tr>
<tr><th colspan="2"><div>Cotas${i('chev')}</div></th></tr>
<tr class="r off"><th>Volume</th><td>0.147 m³</td></tr>
<tr><th colspan="2"><div>Dados de identidade${i('chev')}</div></th></tr>
<tr class="r"><th>Comentários</th><td></td></tr>
<tr class="r off"><th>Marca</th><td></td></tr>
</tbody></table><div class="sp"></div>
<footer><a href="#">Ajuda de propriedades</a><button disabled>Aplicar</button></footer>`);

/* Scroll bar: pos is the space before the thumb, size its length */
define('rv-scroll', `
:host{display:flex;background:#efefef;flex:none}
:host([dir=v]){flex-direction:column;width:14px}
:host([dir=h]){height:14px}
button{width:14px;height:14px}
.track{flex:1;display:flex;min-height:0;min-width:0}
:host([dir=v]) .track{flex-direction:column}
.thumb{display:flex;align-items:center;justify-content:center;border:1px solid #a5a5a5;background:linear-gradient(#f4f4f4,#dcdcdc)}
.thumb,.pre{flex:none}
`, el => {
  const v = el.getAttribute('dir') === 'v', d = v ? 'height' : 'width';
  return `${btn(v ? 'up' : 'left', 'Anterior')}<div class="track"><span class="pre" style="${d}:${el.getAttribute('pos')}"></span><span class="thumb" style="${d}:${el.getAttribute('size')}">${i(v ? 'gripv' : 'griph')}</span></div>${btn(v ? 'drop' : 'right', 'Seguinte')}`;
});

const TREE = [[0, 'Vistas (todas)', 'minus'], [1, 'Plantas estruturais', 'plus'], [1, 'Plantas de piso', 'minus'], [2, 'Laje T.O.'], [2, 'Nível 1'], [2, 'Nível 2', , 1], [2, 'Nível 3'], [2, 'Parede da fundação T.O.'], [2, 'Sapata T.O.'], [2, 'Terreno'], [1, 'Plantas de forro', 'minus'], [2, 'Nível 1']];
define('rv-browser', `
:host{display:grid;grid-template:1fr 13px/1fr 14px;flex:1;min-height:0;border:1px solid #999;border-width:1px 0 0 1px;background:#fff}
.view{overflow:hidden;min-height:0}
ul{list-style:none;margin:0;padding:0;display:grid;grid-auto-rows:1fr;height:173px}
li{display:flex;align-items:center;white-space:nowrap;padding-left:3px;min-height:0}
li i{width:14px;flex:none;align-self:stretch;border-left:1px dotted #bbb;margin-left:2px;margin-right:-2px}
.k{display:flex;align-items:center}
.k::after{content:"";width:6px;border-top:1px dotted #bbb}
.d2 .k::after{width:9px}
.d1 span,.d2 span{padding:0 2px}
.d0 span{padding-left:4px}
.on span{font-weight:bold;background:#e3e3e3;color:#000}
.d2 i:nth-child(2){width:13px}
.d2 .k{border-left:1px dotted #bbb;align-self:stretch;margin-left:2px}
rv-scroll[dir=h]{height:13px}
.c{background:#efefef}
`, `<div class="view"><ul>${TREE.map(([d, t, k, on]) => `<li class="d${d}${on ? ' on' : ''}">${'<i></i>'.repeat(d)}<b class="k">${k ? i(k) : ''}</b>${d ? '' : i('views')}<span>${t}</span></li>`).join('')}</ul></div>
<rv-scroll dir="v" pos="0" size="22px"></rv-scroll><rv-scroll dir="h" pos="0" size="90%"></rv-scroll><div class="c"></div>`);

define('rv-navbar', `
:host{display:flex;flex-direction:column;align-items:center;width:23px;height:77px;border:2px solid #cfcfcf;border-radius:4px;background:#f6f6f6}
.e{align-self:flex-end;height:5px}
.e:last-child{margin-top:auto}
.w{height:17px;position:relative;margin-top:7px}
.w b{position:absolute;right:0;bottom:0;font-size:7px;line-height:7px;color:#4f8fd0}
hr{width:17px;border:0;border-top:1px solid #bbb;margin:1px 0 3px}
.a{height:7px;opacity:.6}
.z{margin:1px 0 3px}
`, `${btn('dot', 'Fechar', 'class="e"')}<button class="w" aria-label="Roda">${i('wheel')}<b>2D</b></button>${btn('dropsm', 'Lista', 'class="a"')}<hr>${btn('zoomr', 'Zoom', 'class="z"')}${btn('dropsm', 'Lista', 'class="a"')}${btn('dot', 'Opções', 'class="e"')}`);

/* Drawing area with its scroll bars and view control bar */
define('rv-viewport', `
:host{display:grid;grid-template:1fr 15px/1fr 14px;position:relative;min-height:0;background:#fff;border:1px solid #777;border-width:1px 4px 1px 1px;border-right-color:#a8a8a8;border-bottom-color:#f4f4f4}
.canvas{position:relative;overflow:hidden}
.canvas svg{display:block;width:100%;height:100%}
.vc{position:absolute;top:5px;right:2px;display:flex;gap:3px;align-items:center}
rv-navbar{position:absolute;top:18px;right:1px}
.bar{display:flex;align-items:center;background:#efefef}
.bar button{width:16px}
.bar .s{width:60px;padding-left:18px;justify-content:flex-start}
.bar rv-scroll{flex:1}
.c{background:#efefef;display:flex;align-items:flex-end;justify-content:center}
rv-palette{position:absolute}
.p{left:2px;top:4px;width:306px;height:294px;z-index:2}
.b{left:14px;top:295px;width:264px;height:201px}
`, `<div class="canvas"><svg><g fill="#e8e8e8" stroke="#4a4a4a" shape-rendering="crispEdges"><rect x="449" y="89" width="367" height="302"/><rect x="474" y="111" width="46" height="46"/></g></svg>
<div class="vc">${btn('vmin', 'Minimizar')}${btn('vmax', 'Restaurar')}${btn('vclose', 'Fechar')}</div><rv-navbar></rv-navbar></div>
<rv-scroll dir="v" pos="calc(50% - 7px)" size="13px"></rv-scroll>
<div class="bar"><button class="s">1 : 100</button>${['detail', 'vstyle', 'sun', 'shadow', 'crop', 'cropv', 'glasses', 'bulbb', 'tvp', 'ana'].map(n => btn(n, n)).join('')}<rv-scroll dir="h" pos="calc(50% - 7px)" size="13px"></rv-scroll></div>
<div class="c">${i('corner')}</div>
<rv-palette class="p" label="Propriedades"><rv-properties></rv-properties></rv-palette>
<rv-palette class="b" label="Navegador de projeto - sapata"><rv-browser></rv-browser></rv-palette>`);

define('rv-status', `
:host{display:flex;align-items:center;height:16px;background:linear-gradient(#e6e6e6,#c4c4c4);border-top:1px solid #999;border-bottom:1px solid #6d8fae;white-space:nowrap}
.m{flex:0 0 592px;padding-left:1px}
button{width:16px}
.cb{position:relative;display:flex}
.cb rv-icon{position:absolute;right:4px;top:6px}
select{height:14px;background:#fff;color:#777;padding-left:2px}
.n{width:16px}
.mid{display:flex;align-items:center;background:#dcdcdc;height:14px}
.r{margin-left:auto;display:flex;align-items:center;padding-right:48px}
.r button{width:17px}
.r button:last-of-type{width:13px}
`, `<span class="m">Não é possível colocar inserções fora dos hospedeiros. Estes elementos não serão copiados.</span>
${btn('group', 'Conjuntos')}<span class="cb" style="margin-left:2px"><select aria-label="Conjunto ativo" style="width:134px"><option></option></select>${i('drop')}</span>
<span class="mid"><button aria-label="Solicitações" style="margin-left:3px">${i('editreq')}</button><span class="n">:0</span><button aria-label="Opções" style="margin-left:6px">${i('wset')}</button>${btn('dopt', 'Opção')}</span>
<span class="cb" style="margin-left:3px"><select aria-label="Opção de projeto" style="width:102px"><option>Modelo principal</option></select>${i('drop')}</span>
<span class="r">${['sellink', 'selund', 'selpin', 'selface', 'drag', 'filter'].map(n => btn(n, n)).join('')}<span>:0</span></span>`);

define('rv-app', `:host{display:grid;grid-template-rows:auto auto auto auto 1fr auto;height:100vh}`,
  `<rv-titlebar></rv-titlebar><rv-tabs></rv-tabs><rv-ribbon></rv-ribbon><rv-options></rv-options><rv-viewport></rv-viewport><rv-status></rv-status>`);
</script>
</body></html>
